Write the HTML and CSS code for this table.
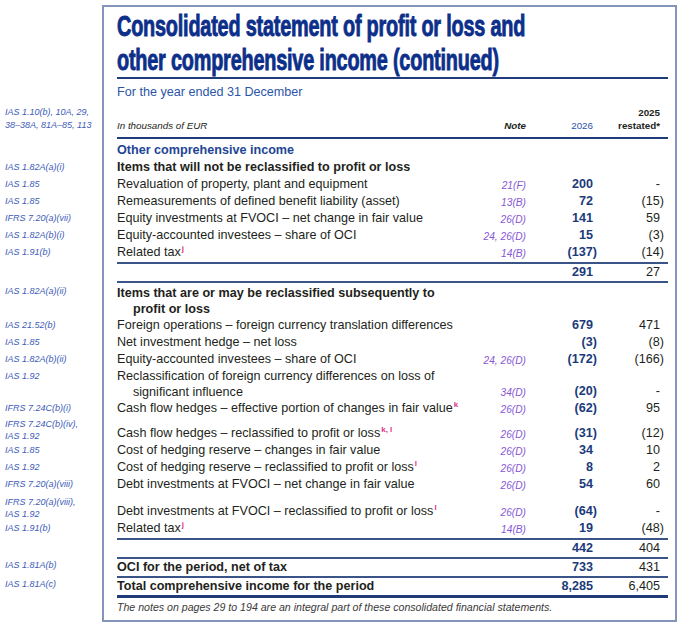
FILE: index.html
```html
<!DOCTYPE html>
<html lang="en">
<head>
<meta charset="utf-8">
<title>Consolidated statement of profit or loss and other comprehensive income</title>
<link rel="stylesheet" href="styles.css">
</head>
<body>
<div class="frame">
  <h1 class="title"><span class="title-in">Consolidated statement of profit or loss and<br>other comprehensive income (continued)</span></h1>
  <p class="subtitle">For the year ended 31 December</p>

  <div class="row head">
    <div class="ref ref2">IAS 1.10(b), 10A, 29,<br>38–38A, 81A–85, 113</div>
    <div class="cells">
      <div class="lbl">In thousands of EUR</div>
      <div class="note">Note</div>
      <div class="cur p">2026</div>
      <div class="prev p">2025<br>restated*</div>
    </div>
  </div>

  <div class="block first">
    <div class="row"><div class="ref"></div><div class="cells"><div class="lbl span sec">Other comprehensive income</div></div></div>
    <div class="row"><div class="ref">IAS 1.82A(a)(i)</div><div class="cells"><div class="lbl span b">Items that will not be reclassified to profit or loss</div></div></div>
    <div class="row"><div class="ref">IAS 1.85</div><div class="cells"><div class="lbl">Revaluation of property, plant and equipment</div><div class="note">21(F)</div><div class="cur p">200</div><div class="prev p">-</div></div></div>
    <div class="row"><div class="ref">IAS 1.85</div><div class="cells"><div class="lbl">Remeasurements of defined benefit liability (asset)</div><div class="note">13(B)</div><div class="cur p">72</div><div class="prev">(15)</div></div></div>
    <div class="row"><div class="ref">IFRS 7.20(a)(vii)</div><div class="cells"><div class="lbl">Equity investments at FVOCI – net change in fair value</div><div class="note">26(D)</div><div class="cur p">141</div><div class="prev p">59</div></div></div>
    <div class="row"><div class="ref">IAS 1.82A(b)(i)</div><div class="cells"><div class="lbl">Equity-accounted investees – share of OCI</div><div class="note">24, 26(D)</div><div class="cur p">15</div><div class="prev">(3)</div></div></div>
    <div class="row"><div class="ref">IAS 1.91(b)</div><div class="cells"><div class="lbl">Related tax<sup class="fn">j</sup></div><div class="note">14(B)</div><div class="cur">(137)</div><div class="prev">(14)</div></div></div>
  </div>

  <div class="row sub"><div class="ref"></div><div class="cells"><div class="lbl"></div><div class="note"></div><div class="cur p">291</div><div class="prev p">27</div></div></div>

  <div class="block second">
    <div class="row"><div class="ref">IAS 1.82A(a)(ii)</div><div class="cells"><div class="lbl b wrap">Items that are or may be reclassified subsequently to profit or loss</div></div></div>
    <div class="row"><div class="ref">IAS 21.52(b)</div><div class="cells"><div class="lbl">Foreign operations – foreign currency translation differences</div><div class="note"></div><div class="cur p">679</div><div class="prev p">471</div></div></div>
    <div class="row"><div class="ref">IAS 1.85</div><div class="cells"><div class="lbl">Net investment hedge – net loss</div><div class="note"></div><div class="cur">(3)</div><div class="prev">(8)</div></div></div>
    <div class="row"><div class="ref">IAS 1.82A(b)(ii)</div><div class="cells"><div class="lbl">Equity-accounted investees – share of OCI</div><div class="note">24, 26(D)</div><div class="cur">(172)</div><div class="prev">(166)</div></div></div>
    <div class="row"><div class="ref">IAS 1.92</div><div class="cells"><div class="lbl wrap">Reclassification of foreign currency differences on loss of significant influence</div><div class="note">34(D)</div><div class="cur">(20)</div><div class="prev p">-</div></div></div>
    <div class="row"><div class="ref">IFRS 7.24C(b)(i)</div><div class="cells"><div class="lbl">Cash flow hedges – effective portion of changes in fair value<sup class="fn">k</sup></div><div class="note">26(D)</div><div class="cur">(62)</div><div class="prev p">95</div></div></div>
    <div class="row tall"><div class="ref ref12">IFRS 7.24C(b)(iv),<br>IAS 1.92</div><div class="cells gap8"><div class="lbl">Cash flow hedges – reclassified to profit or loss<sup class="fn">k, l</sup></div><div class="note">26(D)</div><div class="cur">(31)</div><div class="prev">(12)</div></div></div>
    <div class="row"><div class="ref">IAS 1.85</div><div class="cells"><div class="lbl">Cost of hedging reserve – changes in fair value</div><div class="note">26(D)</div><div class="cur p">34</div><div class="prev p">10</div></div></div>
    <div class="row"><div class="ref">IAS 1.92</div><div class="cells"><div class="lbl">Cost of hedging reserve – reclassified to profit or loss<sup class="fn">l</sup></div><div class="note">26(D)</div><div class="cur p">8</div><div class="prev p">2</div></div></div>
    <div class="row"><div class="ref">IFRS 7.20(a)(viii)</div><div class="cells"><div class="lbl">Debt investments at FVOCI – net change in fair value</div><div class="note">26(D)</div><div class="cur p">54</div><div class="prev p">60</div></div></div>
    <div class="row tall"><div class="ref ref12">IFRS 7.20(a)(viii),<br>IAS 1.92</div><div class="cells gap10"><div class="lbl">Debt investments at FVOCI – reclassified to profit or loss<sup class="fn">l</sup></div><div class="note">26(D)</div><div class="cur">(64)</div><div class="prev p">-</div></div></div>
    <div class="row"><div class="ref">IAS 1.91(b)</div><div class="cells"><div class="lbl">Related tax<sup class="fn">j</sup></div><div class="note">14(B)</div><div class="cur p">19</div><div class="prev">(48)</div></div></div>
  </div>

  <div class="row sub"><div class="ref"></div><div class="cells"><div class="lbl"></div><div class="note"></div><div class="cur p">442</div><div class="prev p">404</div></div></div>
  <div class="row sub"><div class="ref">IAS 1.81A(b)</div><div class="cells"><div class="lbl b">OCI for the period, net of tax</div><div class="note"></div><div class="cur p">733</div><div class="prev p">431</div></div></div>
  <div class="row sub total"><div class="ref">IAS 1.81A(c)</div><div class="cells"><div class="lbl b">Total comprehensive income for the period</div><div class="note"></div><div class="cur p">8,285</div><div class="prev p">6,405</div></div></div>

  <p class="foot">The notes on pages 29 to 194 are an integral part of these consolidated financial statements.</p>
</div>
</body>
</html>
```

FILE: styles.css
```css
* { box-sizing: border-box; margin: 0; padding: 0; }
html, body { background: #fff; }
body {
  margin: 0;
  font-family: "Liberation Sans", Arial, sans-serif;
  font-size: 12.6px;
  color: #231f20;
}
.frame {
  margin: 5px 5px 0 102px;
  border: 2px solid #8494ba;
  padding: 2px 7px 6px 13px;
}
.title {
  font-size: 29px;
  line-height: 34px;
  font-weight: 700;
  color: #0c2f8a;
  white-space: nowrap;
  border-bottom: 2px solid #1f3c78;
  overflow: hidden;
}
.title-in {
  display: inline-block;
  transform: scaleX(0.685);
  transform-origin: 0 0;
  letter-spacing: -0.3px;
  -webkit-text-stroke: 0.9px #0c2f8a;
}
.subtitle {
  margin-top: 5px;
  line-height: 17px;
  color: #2c55a8;
}
.row { display: flex; }
.ref {
  flex: 0 0 112px;
  margin-left: -112px;
  font-size: 9px;
  font-style: italic;
  line-height: 17px;
  color: #3d5bb8;
  white-space: nowrap;
}
.ref2 { line-height: 13px; }
.ref12 { line-height: 12px; }
.cells {
  flex: 1;
  display: grid;
  grid-template-columns: 1fr 60px 71px 67px;
  align-items: end;
  padding-right: 4px;
  line-height: 17px;
}
.lbl { padding-left: 16px; text-indent: -16px; }
.span { grid-column: 1 / -1; }
.wrap { line-height: 16px; }
.b { font-weight: 700; }
.sec { font-weight: 700; color: #1e4596; }
.note {
  text-align: right;
  font-size: 10.2px;
  font-style: italic;
  color: #8756d6;
  line-height: 15.3px;
}
.cur { text-align: right; font-weight: 700; color: #1b3a7a; }
.prev { text-align: right; }
.p { padding-right: 4px; }
.fn {
  font-size: 8px;
  line-height: 0;
  vertical-align: 5px;
  font-weight: 700;
  color: #e0308a;
  margin-left: 1px;
}

.head { margin-top: 5px; }
.head .cells {
  line-height: 13px;
  padding-bottom: 5px;
  border-bottom: 2px solid #1f3c78;
}
.head .lbl { font-size: 9.8px; font-style: italic; }
.head .note { font-size: 9.8px; font-weight: 700; font-style: italic; color: #231f20; line-height: 13px; }
.head .cur { font-size: 9.8px; font-weight: 400; color: #2c55a8; }
.head .prev { font-size: 9.8px; font-weight: 700; }

.first .row:first-child .cells { padding-top: 3px; }
.first .row:last-child .cells { padding-bottom: 1px; }
.second .row:first-child .cells { padding-top: 2px; }
.second .row:last-child .cells { padding-bottom: 1px; }

.tall { align-items: flex-end; }
.gap8 { padding-top: 8px; }
.gap10 { padding-top: 10px; }

.sub .cells { border-top: 2px solid #3b5488; }
.first + .sub .cells { border-bottom: 2px solid #3b5488; }
.total .cells { border-bottom: 3px solid #1f3c78; }

.foot {
  margin-top: 2px;
  font-size: 10.6px;
  font-style: italic;
  line-height: 14px;
  color: #3a3a3a;
}
```
